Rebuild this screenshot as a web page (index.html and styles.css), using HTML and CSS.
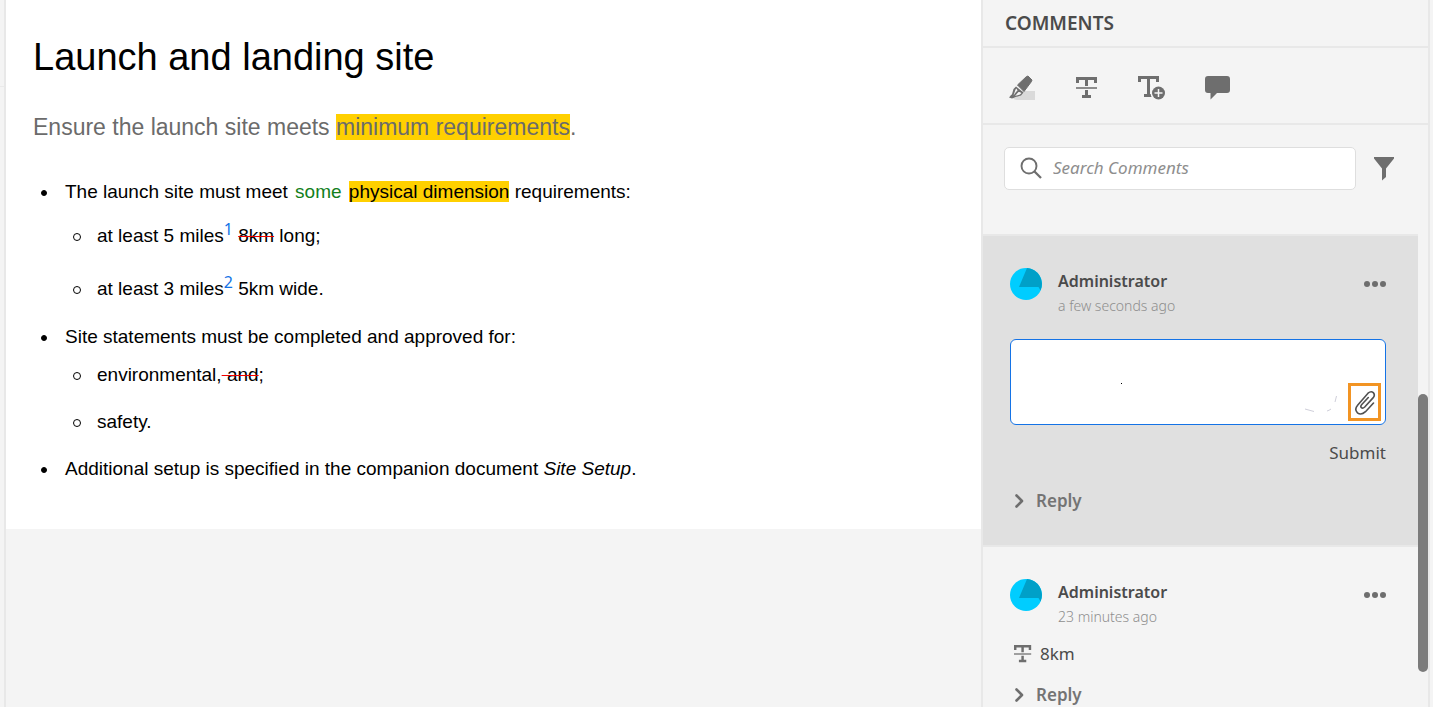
FILE: index.html
```html
<!DOCTYPE html>
<html lang="en">
<head>
<meta charset="utf-8">
<title>Launch and landing site</title>
<link rel="stylesheet" href="styles.css">
</head>
<body>
<svg class="defs" aria-hidden="true">
  <symbol id="strike" viewBox="0 0 22 22">
    <path d="M0 0h21v6h-3V3h-6v6H9V3H3v3H0zM9 13h3v5h3v3H6v-3h3z" fill="#6e6e6e"/>
    <path d="M0 10h21v2H0z" fill="#8c8c8c"/>
  </symbol>
  <symbol id="dots" viewBox="0 0 22 6">
    <g fill="#6e6e6e"><circle cx="3" cy="3" r="3"/><circle cx="11" cy="3" r="3"/><circle cx="19" cy="3" r="3"/></g>
  </symbol>
  <symbol id="chevron" viewBox="0 0 10 14">
    <path d="M2.500 1.500 8 7l-5.500 5.500" fill="none" stroke="#6e6e6e" stroke-width="2.600" stroke-linecap="round" stroke-linejoin="round"/>
  </symbol>
  <symbol id="avatar" viewBox="0 0 32 32">
    <circle cx="16" cy="16" r="16" fill="#00cdff"/>
    <path d="M17 0a16 16 0 0 1 13.500 22.500L28.500 19H9z" fill="#00a0c8"/>
  </symbol>
</svg>
<div class="app">
  <div class="rail"></div>
  <main class="stage">
    <article class="doc">
      <h1>Launch and landing site</h1>
      <p class="lead">Ensure the launch site meets <mark>minimum requirements</mark>.</p>
      <ul class="list">
        <li>The launch site must meet <ins>some</ins> <mark>physical dimension</mark> requirements:
          <ul class="sub loose">
            <li>at least 5 miles<sup>1</sup> <del>8km</del> long;</li>
            <li>at least 3 miles<sup>2</sup> 5km wide.</li>
          </ul>
        </li>
        <li>Site statements must be completed and approved for:
          <ul class="sub">
            <li>environmental,<del> and</del>;</li>
            <li>safety.</li>
          </ul>
        </li>
        <li>Additional setup is specified in the companion document <cite>Site Setup</cite>.</li>
      </ul>
    </article>
  </main>
  <aside class="panel">
    <h2 class="panel-title">COMMENTS</h2>
    <div class="tools">
      <button aria-label="Highlight"><svg width="28" height="28" viewBox="0 0 28 28"><path d="M5 24 14 17h13v9H9q-3 0-4-2z" fill="#dadada"/><path d="m18.500 2.500 1.500-.5 4 4-.5 1.500L16 17.500 9.500 11z" fill="#6e6e6e" stroke="#6e6e6e" stroke-linejoin="round"/><path d="M8 12.500 5.500 15 3.500 22 6 23.500l7-2 2.500-3z" fill="#6e6e6e"/><path d="m7.500 15.500-2 6L8 18l1.500-1.500-1-2zM10.500 18 7 22l5-1.500 1.500-1.500-2-1z" fill="#f4f4f4"/><path d="M1 23.500 3.500 20.500l3 3L4 24.500z" fill="#6e6e6e"/></svg></button>
      <button aria-label="Strikethrough"><svg width="22" height="22"><use href="#strike"/></svg></button>
      <button aria-label="Insert text"><svg width="27" height="24" viewBox="0 0 27 24"><path d="M0 0h21v6h-3V3h-6v15h2v3H6v-3h3V3H3v3H0z" fill="#6e6e6e"/><circle cx="20.500" cy="17" r="8" fill="#f4f4f4"/><circle cx="20.500" cy="17" r="6.500" fill="#6e6e6e"/><path d="M20.500 13v8M16.500 17h8" stroke="#f4f4f4" stroke-width="1.500"/></svg></button>
      <button aria-label="Add comment"><svg width="25" height="24" viewBox="0 0 25 24"><path d="M3 0h19q3 0 3 3v11q0 3-3 3H12l-6.500 6.500V17H3q-3 0-3-3V3q0-3 3-3z" fill="#6e6e6e"/></svg></button>
    </div>
    <div class="search-row">
      <label class="search">
        <svg width="22" height="22" viewBox="0 0 22 22" aria-hidden="true"><circle cx="9" cy="9" r="7.500" fill="none" stroke="#6e6e6e" stroke-width="1.900"/><path d="m14.500 14.500 6.500 6.500" stroke="#6e6e6e" stroke-width="2.300"/></svg>
        <input type="search" aria-label="Search Comments" placeholder="Search Comments">
      </label>
      <button aria-label="Filter"><svg width="20" height="24" viewBox="0 0 20 24"><path d="M0 0h20v1.500l-8 10v8.500L8 23.500v-12L0 1.500z" fill="#6e6e6e"/></svg></button>
    </div>
    <div class="feed">
      <section class="comment active">
        <header class="who">
          <svg width="32" height="32" aria-hidden="true"><use href="#avatar"/></svg>
          <div><h3>Administrator</h3><time>a few seconds ago</time></div>
          <button aria-label="More actions"><svg width="22" height="6"><use href="#dots"/></svg></button>
        </header>
        <div class="compose">
          <textarea aria-label="Comment"></textarea>
          <svg class="specks" width="220" height="34" viewBox="0 0 220 34" aria-hidden="true"><path d="M0 0h1v1H0z" fill="#000"/><path d="m184 26 9 2.500M206 28q2-.5 4-2M214 19l1.500-6" fill="none" stroke="#cfcfda"/></svg>
          <button class="attach" aria-label="Attach file"><svg width="24" height="28" viewBox="0 0 24 28"><path d="m21.500 15.500-8 8.700q-4.500 4-8 1.100-3.600-3.300.3-7.800L16 5.700q3-2.600 5.300-.6 2.200 2.400-.3 5.300L12.700 19.500q-2 1.900-3.300.7-1.300-1.300.4-3.200L16.300 10" transform="translate(-1 -.5)" fill="none" stroke="#505050" stroke-width="1.600" stroke-linecap="round"/></svg></button>
        </div>
        <button class="submit">Submit</button>
        <button class="reply"><svg width="10" height="14"><use href="#chevron"/></svg>Reply</button>
      </section>
      <section class="comment">
        <header class="who">
          <svg width="32" height="32" aria-hidden="true"><use href="#avatar"/></svg>
          <div><h3>Administrator</h3><time>23 minutes ago</time></div>
          <button aria-label="More actions"><svg width="22" height="6"><use href="#dots"/></svg></button>
        </header>
        <p class="change"><svg width="18" height="18" aria-hidden="true"><use href="#strike"/></svg>8km</p>
        <button class="reply"><svg width="10" height="14"><use href="#chevron"/></svg>Reply</button>
      </section>
    </div>
    <div class="thumb"></div>
  </aside>
</div>
</body>
</html>
```

FILE: styles.css
```css
*, *::before { box-sizing: border-box; }
body, h1, h2, h3, p, ul { margin: 0; }
ul { padding: 0; }
svg { display: block; flex: none; }
.defs { display: none; }
button { border: 0; padding: 0; background: none; font: inherit; color: inherit; cursor: pointer; }

.app {
  display: grid;
  grid-template-columns: 6px minmax(0, 1fr) 449px 3px;
  height: 100vh;
  overflow: hidden;
  background: #f4f4f4;
}
.rail { border-right: 2px solid #e8e8e8; background: linear-gradient(#eaeaea, #eaeaea) 0 86px / 100% 1px no-repeat; }

.doc {
  padding: 34px 27px 49px;
  background: #fff;
  color: #000;
  font: 19px/22px "Liberation Sans", sans-serif;
}
.doc h1 { font-size: 38px; font-weight: 400; line-height: 46px; }
.doc mark { background: #ffd000; color: inherit; }
.lead { margin: 33px 0 40px; color: #6b6b6b; font-size: 23px; line-height: 28px; }
.list { padding-left: 32px; list-style: none; }
.list > li + li { margin-top: 26px; }
.list > li + li + li { margin-top: 25px; }
.list li { position: relative; }
.list li::before { content: ""; position: absolute; left: -24px; top: 9px; width: 6px; height: 6px; border: 1px solid #000; border-radius: 50%; background: #000; }
.list .sub li::before { top: 8px; width: 8px; height: 8px; background: none; }
.sub { margin-top: 16px; padding-left: 32px; list-style: none; }
.sub li + li { margin-top: 25px; }
.loose { margin-top: 22px; }
.loose li + li { margin-top: 31px; }
.doc ins { padding: 0 2px; color: #12801c; text-decoration: none; }
.doc del { text-decoration: line-through #f00000 1px; }
.doc sup { color: #1473e6; font: 16px/1px "Noto Sans", sans-serif; vertical-align: 7px; }

.panel {
  position: relative;
  border: solid #e8e8e8;
  border-width: 0 2px;
  overflow: hidden;
  color: #4b4b4b;
  font: 17px/24px "Noto Sans", sans-serif;
}
.panel-title { padding: 11px 22px; border-bottom: 2px solid #e8e8e8; font-size: 19px; font-weight: 600; line-height: 24px; }
.tools { display: flex; align-items: center; height: 77px; gap: 40px; padding: 4px 25px 0; border-bottom: 2px solid #e8e8e8; }
.search-row { display: flex; align-items: center; gap: 18px; padding: 22px 34px 44px 21px; }
.search { display: flex; align-items: center; flex: 1; gap: 11px; height: 43px; padding: 0 15px 2px; border: 1px solid #dedede; border-radius: 5px; background: #fff; }
.search input { flex: 1; min-width: 0; padding: 0; border: 0; outline: 0; background: none; font: italic 17px/24px "Noto Sans", sans-serif; }
.search input::placeholder { color: #8e8e8e; opacity: 1; }

.feed { margin-right: 10px; }
.comment { padding: 32px 32px 32px 27px; border-top: 2px solid #e8e8e8; }
.active { background: #e0e0e0; }
.who { display: grid; grid-template-columns: 32px 1fr 22px; align-items: start; gap: 16px; height: 48px; }
.who button { padding: 13px 0; }
.who h3 { font-size: 16px; font-weight: 600; line-height: 26px; }
.who time { display: block; color: #8e8e8e; font-size: 14px; font-weight: 300; line-height: 24px; }

.compose { position: relative; margin-top: 23px; }
.compose textarea { display: block; width: 100%; height: 86px; padding: 8px; border: 1px solid #1473e6; border-radius: 6px; outline: 0; resize: none; background: #fff; font: inherit; }
.specks { position: absolute; right: 45px; bottom: 8px; pointer-events: none; }
.attach { position: absolute; right: 5px; bottom: 4px; display: grid; place-items: center; width: 33px; height: 38px; border: 3px solid #f29423; }
.submit { display: block; margin: 16px 0 24px auto; line-height: 24px; }
.reply { display: flex; align-items: center; gap: 12px; padding-left: 4px; color: #747474; font-weight: 600; line-height: 24px; }
.change { display: flex; align-items: center; gap: 8px; margin: 15px 0 17px 4px; }
.thumb { position: absolute; top: 394px; right: 0; width: 10px; height: 278px; border-radius: 5px; background: #7b7b7b; }
```
